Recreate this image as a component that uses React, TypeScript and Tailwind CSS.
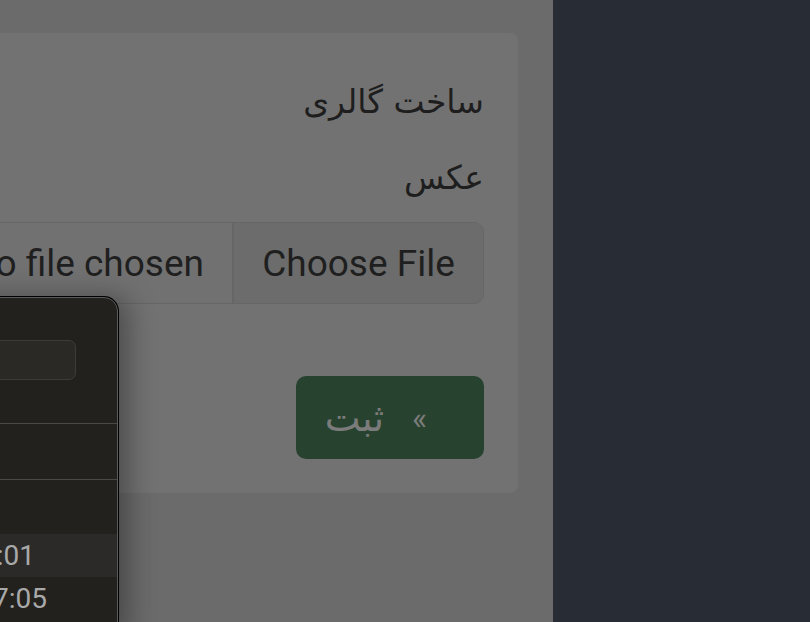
import React from "react";

const latin = "font-['Roboto','Liberation_Sans',sans-serif]";
const persian = "font-['DejaVu_Sans','Noto_Sans',sans-serif]";

function FileField() {
  return (
    <div className="flex h-[82px] w-[560px] shrink-0 overflow-hidden rounded-[10px] border border-[#666666] bg-[#717171]">
      <div className="flex flex-1 items-center justify-end pr-[28px]">
        <span className={`${latin} text-[37px] leading-none text-[#1f1f1f] whitespace-nowrap`}>No file chosen</span>
      </div>
      <div className="flex w-[251px] items-center justify-center border-l-2 border-[#666666] bg-[#6b6c6b]">
        <span className={`${latin} text-[37px] leading-none text-[#1f1f1f]`}>Choose File</span>
      </div>
    </div>
  );
}

function HistoryPopup() {
  return (
    <div className="absolute left-[-220px] top-[297px] h-[340px] w-[338px] rounded-tr-[14px] border border-[#5a5a5a] bg-[#22211e] shadow-[0_0_0_1px_#000,10px_0_28px_rgba(0,0,0,0.35)]">
      <div className="flex justify-end pr-[41px] pt-[42px]">
        <div className="h-[40px] w-[240px] rounded-[7px] border border-[#3d3c39] bg-[#2a2926]" />
      </div>
      <div className="mt-[43px] h-px bg-[#4a4946]" />
      <div className="mt-[55px] h-px bg-[#4a4946]" />
      <div className="mt-[54px] flex h-[43px] items-center justify-end bg-[#2b2a28] pr-[82px]">
        <span className={`${latin} text-[28px] leading-none text-[#a9a9a9]`}>10:24:01</span>
      </div>
      <div className="flex h-[43px] items-center justify-end pr-[70px]">
        <span className={`${latin} text-[28px] leading-none text-[#a9a9a9]`}>10:17:05</span>
      </div>
    </div>
  );
}

export default function App() {
  return (
    <div className="relative flex h-[622px] w-[810px] overflow-hidden">
      <div className="w-[553px] shrink-0 overflow-hidden bg-[#6b6b6b] pr-[35px] pt-[33px]">
        <div dir="rtl" className="ml-[-60px] h-[460px] rounded-[8px] bg-[#727272] pr-[34px] pt-[45px]">
          <h1 className={`${persian} text-[33px] leading-[48px] text-[#1e1e1e]`}>ساخت گالری</h1>
          <p className={`${persian} mt-[30px] text-[33px] leading-[44px] text-[#1e1e1e]`}>عکس</p>
          <div dir="ltr" className="mt-[22px] flex justify-end">
            <FileField />
          </div>
          <div className="mt-[72px] flex">
            <button className="flex h-[83px] w-[188px] items-center gap-[28px] rounded-[10px] bg-[#27432f] pr-[57px]">
              <span className={`${latin} text-[32px] leading-none text-[#7b7b7b]`}>»</span>
              <span className={`${persian} text-[38px] leading-none text-[#7b7b7b]`}>ثبت</span>
            </button>
          </div>
        </div>
      </div>
      <div className="flex-1 bg-[#282c35]" />
      <HistoryPopup />
    </div>
  );
}
